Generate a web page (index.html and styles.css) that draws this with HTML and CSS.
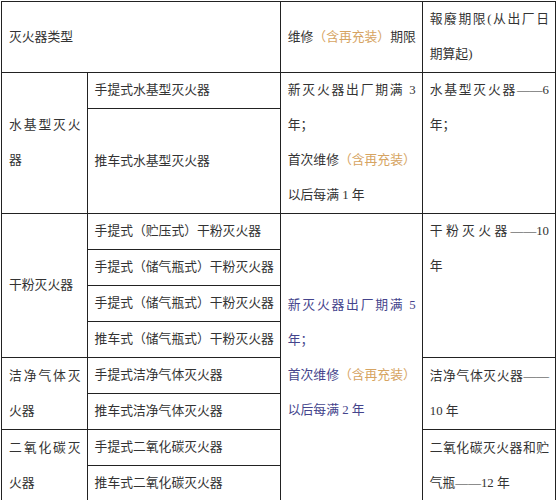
FILE: index.html
```html
<!DOCTYPE html>
<html lang="zh-CN">
<head>
<meta charset="utf-8">
<title>灭火器维修与报废期限</title>
<link rel="stylesheet" href="styles.css">
</head>
<body>
<table class="t">
  <colgroup><col class="c1"><col class="c2"><col class="c3"><col class="c4"></colgroup>
  <tr class="r71">
    <td colspan="2">灭火器类型</td>
    <td><div class="ln">维修<span class="o">（含再充装）</span>期限</div></td>
    <td><div class="ln j">報廢期限(从出厂日</div><div class="ln">期算起)</div></td>
  </tr>
  <tr class="r36">
    <td rowspan="2"><div class="ln j">水基型灭火</div><div class="ln">器</div></td>
    <td>手提式水基型灭火器</td>
    <td rowspan="2"><div class="ln j">新灭火器出厂期满 3</div><div class="ln">年；</div><div class="ln">首次维修<span class="o">（含再充装）</span></div><div class="ln">以后每满 1 年</div></td>
    <td rowspan="2" class="top"><div class="ln j">水基型灭火器——6</div><div class="ln">年；</div></td>
  </tr>
  <tr class="r105">
    <td>推车式水基型灭火器</td>
  </tr>
  <tr class="r36">
    <td rowspan="4">干粉灭火器</td>
    <td>手提式（贮压式）干粉灭火器</td>
    <td rowspan="8" class="b"><div class="ln j">新灭火器出厂期满 5</div><div class="ln">年；</div><div class="ln">首次维修<span class="o">（含再充装）</span></div><div class="ln">以后每满 2 年</div></td>
    <td rowspan="4" class="top"><div class="ln j">干粉灭火器——10</div><div class="ln">年</div></td>
  </tr>
  <tr class="r36"><td>手提式（储气瓶式）干粉灭火器</td></tr>
  <tr class="r35"><td>手提式（储气瓶式）干粉灭火器</td></tr>
  <tr class="r36"><td>推车式（储气瓶式）干粉灭火器</td></tr>
  <tr class="r36">
    <td rowspan="2"><div class="ln j">洁净气体灭</div><div class="ln">火器</div></td>
    <td>手提式洁净气体灭火器</td>
    <td rowspan="2"><div class="ln j">洁净气体灭火器——</div><div class="ln">10 年</div></td>
  </tr>
  <tr class="r35"><td>推车式洁净气体灭火器</td></tr>
  <tr class="r36">
    <td rowspan="2"><div class="ln j">二氧化碳灭</div><div class="ln">火器</div></td>
    <td>手提式二氧化碳灭火器</td>
    <td rowspan="2"><div class="ln j">二氧化碳灭火器和贮</div><div class="ln">气瓶——12 年</div></td>
  </tr>
  <tr class="r35"><td>推车式二氧化碳灭火器</td></tr>
</table>
</body>
</html>
```
FILE: styles.css
```css
html, body {
  margin: 0;
  padding: 0;
  background: #ffffff;
}
body {
  font-family: "Liberation Serif", "Noto Sans CJK SC", serif;
  font-size: 12.8px;
  color: #333333;
}
.t {
  margin: 1px 0 0 1px;
  border-collapse: collapse;
  table-layout: fixed;
  border: 1px solid #222222;
}
.c1 { width: 87px; }
.c2 { width: 191px; }
.c3 { width: 141px; }
.c4 { width: 134px; }
.t td {
  border: 1px solid #222222;
  padding: 0 6px 0 7px;
  vertical-align: middle;
  line-height: 35px;
  white-space: nowrap;
  text-align: left;
}
.t td.top { vertical-align: top; }
.ln {
  line-height: 35px;
  white-space: nowrap;
}
.j {
  text-align: justify;
  text-align-last: justify;
}
.o { color: #d6a462; }
.b { color: #44448c; }
.b .o { color: #d6a462; }
.r35 { height: 35px; }
.r36 { height: 36px; }
.r71 { height: 71px; }
.r105 { height: 105px; }
```
